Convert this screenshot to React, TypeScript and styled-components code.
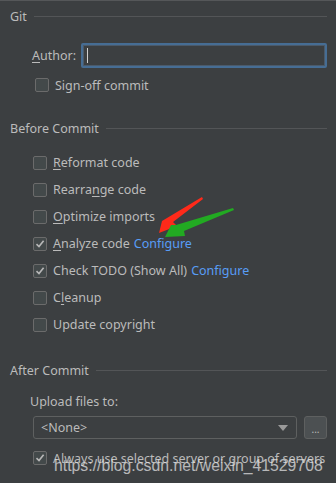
import React from "react";
import styled, { createGlobalStyle } from "styled-components";

const Global = createGlobalStyle`
  html, body { margin: 0; padding: 0; background: #3c3f41; }
  body { font-family: "Noto Sans", "Open Sans", sans-serif; }
`;

const Panel = styled.div`
  position: relative;
  width: 336px;
  height: 483px;
  box-sizing: border-box;
  background: #3c3f41;
  border-top: 1px solid #555759;
  padding: 0 9px 0 10px;
  color: #bbbbbb;
  font-size: 12.5px;
  overflow: hidden;
`;

const TitleRow = styled.div<{ $top: number }>`
  display: flex;
  align-items: center;
  gap: 7px;
  height: 20px;
  margin-top: ${(p) => p.$top}px;
`;

const TitleText = styled.span`
  white-space: nowrap;
`;

const Rule = styled.div`
  flex: 1;
  height: 1px;
  background: #535557;
`;

const Row = styled.div<{ $top?: number; $left: number; $h?: number }>`
  display: flex;
  align-items: center;
  height: ${(p) => p.$h ?? 27}px;
  margin-top: ${(p) => p.$top ?? 0}px;
  padding-left: ${(p) => p.$left}px;
  white-space: nowrap;
`;

const Label = styled.span`
  margin-right: 5px;
`;

const U = styled.span`
  text-decoration: underline;
  text-underline-offset: 2px;
`;

const Input = styled.div`
  flex: 1;
  height: 25px;
  box-sizing: border-box;
  border: 2px solid #466d94;
  border-radius: 2px;
  background: #3c3f41;
  box-shadow: inset 0 0 0 1px #4b5a6a;
  display: flex;
  align-items: center;
  padding-left: 4px;
`;

const Caret = styled.div`
  width: 1px;
  height: 15px;
  background: #cfcfcf;
`;

const Box = styled.span`
  width: 14px;
  height: 14px;
  box-sizing: border-box;
  border: 1px solid #6b6b6b;
  border-radius: 2px;
  background: #43494a;
  margin-right: 6px;
  display: inline-flex;
  align-items: center;
  justify-content: center;
  flex: none;
`;

const Link = styled.span`
  color: #589df6;
  margin-left: 4px;
`;

const UploadLabel = styled.div`
  height: 18px;
  display: flex;
  align-items: center;
  margin-top: 12px;
  padding-left: 20px;
`;

const ComboRow = styled.div`
  display: flex;
  gap: 7px;
  margin-top: 6px;
  padding-left: 23px;
  height: 23px;
`;

const Combo = styled.div`
  flex: 1;
  box-sizing: border-box;
  border: 1px solid #5e6060;
  border-radius: 3px;
  display: flex;
  align-items: center;
  justify-content: space-between;
  padding: 0 8px 0 7px;
`;

const Arrow = styled.span`
  width: 0;
  height: 0;
  border-left: 5px solid transparent;
  border-right: 5px solid transparent;
  border-top: 6px solid #9a9a9a;
`;

const DotsButton = styled.div`
  width: 23px;
  box-sizing: border-box;
  border: 1px solid #5e6060;
  border-radius: 3px;
  background: #4c5052;
  display: flex;
  align-items: flex-end;
  justify-content: center;
  padding-bottom: 4px;
  font-size: 10px;
  line-height: 10px;
`;

const Watermark = styled.div`
  position: absolute;
  left: 54px;
  top: 456px;
  font-family: "Liberation Sans", Arial, sans-serif;
  font-size: 15.8px;
  color: rgba(225, 225, 225, 0.75);
  white-space: nowrap;
  pointer-events: none;
`;

const Arrows = styled.svg`
  position: absolute;
  left: 0;
  top: 0;
  pointer-events: none;
`;

const Check = () => (
  <svg width="10" height="10" viewBox="0 0 10 10">
    <path d="M1.5 5.2 L4 7.6 L8.6 1.8" fill="none" stroke="#b8b8b8" strokeWidth="1.6" />
  </svg>
);

const CheckRow: React.FC<{ checked?: boolean; children: React.ReactNode; top?: number }> = ({
  checked,
  children,
  top,
}) => (
  <Row $left={23} $top={top}>
    <Box>{checked && <Check />}</Box>
    <span>{children}</span>
  </Row>
);

export default function App() {
  return (
    <>
      <Global />
      <Panel>
        <TitleRow $top={5}>
          <TitleText>Git</TitleText>
          <Rule />
        </TitleRow>
        <Row $left={22} $top={17} $h={25}>
          <Label>
            <U>A</U>uthor:
          </Label>
          <Input>
            <Caret />
          </Input>
        </Row>
        <Row $left={25} $top={7} $h={20}>
          <Box />
          <span>Sign-off commit</span>
        </Row>

        <TitleRow $top={23}>
          <TitleText>Before Commit</TitleText>
          <Rule />
        </TitleRow>
        <CheckRow top={11}>
          <U>R</U>eformat code
        </CheckRow>
        <CheckRow>
          Rearra<U>n</U>ge code
        </CheckRow>
        <CheckRow>
          <U>O</U>ptimize imports
        </CheckRow>
        <CheckRow checked>
          <U>A</U>nalyze code<Link>Configure</Link>
        </CheckRow>
        <CheckRow checked>
          Check TODO (Show All)<Link>Configure</Link>
        </CheckRow>
        <CheckRow>
          C<U>l</U>eanup
        </CheckRow>
        <CheckRow>Update copyright</CheckRow>

        <TitleRow $top={22}>
          <TitleText>After Commit</TitleText>
          <Rule />
        </TitleRow>
        <UploadLabel>Upload files to:</UploadLabel>
        <ComboRow>
          <Combo>
            <span>&lt;None&gt;</span>
            <Arrow />
          </Combo>
          <DotsButton>...</DotsButton>
        </ComboRow>
        <Row $left={23} $top={9} $h={20}>
          <Box>
            <Check />
          </Box>
          <span>Always use selected server or group of servers</span>
        </Row>

        <Watermark>https://blog.csdn.net/weixin_41529708</Watermark>
        <Arrows width="336" height="483" viewBox="0 0 336 483">
          <polygon points="202,196 162,220 159,232 177,225 173,221 203,198" fill="#ff2a1a" />
          <polygon points="233,207 176,224 171,224 165,236 185,235 184,230 234,209" fill="#22aa22" />
        </Arrows>
      </Panel>
    </>
  );
}
